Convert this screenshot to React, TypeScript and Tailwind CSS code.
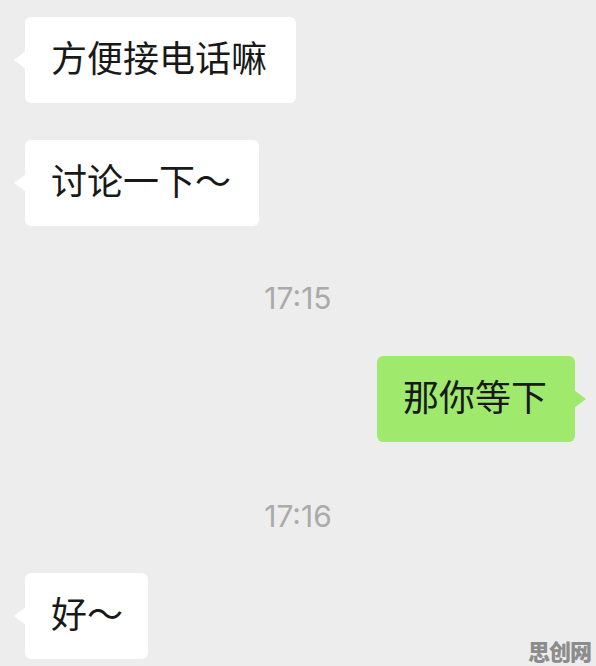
import React from "react";

const cjk = { fontFamily: '"Noto Sans CJK SC", "Noto Sans", sans-serif' };

function LeftBubble({ text, width }: { text: string; width: string }) {
  return (
    <div className="flex pl-[25px]">
      <div
        className={`relative h-[86px] ${width} flex items-center pl-[26px] pb-[8px] bg-white rounded-[6px] text-[36px] text-[#191919]`}
        style={cjk}
      >
        <div className="absolute left-[-11px] top-[43px] -translate-y-1/2 w-0 h-0 border-y-[9px] border-y-transparent border-r-[12px] border-r-white" />
        <span className="leading-none">{text}</span>
      </div>
    </div>
  );
}

function Time({ t }: { t: string }) {
  return (
    <div
      className="h-[40px] flex items-center justify-center text-[30px] text-[#aaaaaa] leading-none"
      style={{ fontFamily: 'Inter, "Noto Sans", sans-serif' }}
    >
      {t}
    </div>
  );
}

export default function App() {
  return (
    <div className="relative w-[596px] h-[666px] overflow-hidden bg-[#ededed] pt-[17px] flex flex-col">
      <LeftBubble text="方便接电话嘛" width="w-[271px]" />
      <div className="h-[37px]" />
      <LeftBubble text="讨论一下～" width="w-[234px]" />
      <div className="h-[52px]" />
      <Time t="17:15" />
      <div className="h-[38px]" />
      <div className="flex justify-end pr-[21px]">
        <div
          className="relative h-[86px] w-[198px] flex items-center pl-[26px] pb-[8px] bg-[#9fe96d] rounded-[6px] text-[36px] text-[#191919]"
          style={cjk}
        >
          <span className="leading-none">那你等下</span>
          <div className="absolute right-[-11px] top-[43px] -translate-y-1/2 w-0 h-0 border-y-[9px] border-y-transparent border-l-[12px] border-l-[#9fe96d]" />
        </div>
      </div>
      <div className="h-[54px]" />
      <Time t="17:16" />
      <div className="h-[37px]" />
      <LeftBubble text="好～" width="w-[123px]" />
      <div
        className="absolute right-[5px] bottom-[2px] text-[22px] font-black text-[#8c8c8c] leading-[28px] tracking-[-1px]"
        style={cjk}
      >
        思创网
      </div>
    </div>
  );
}
